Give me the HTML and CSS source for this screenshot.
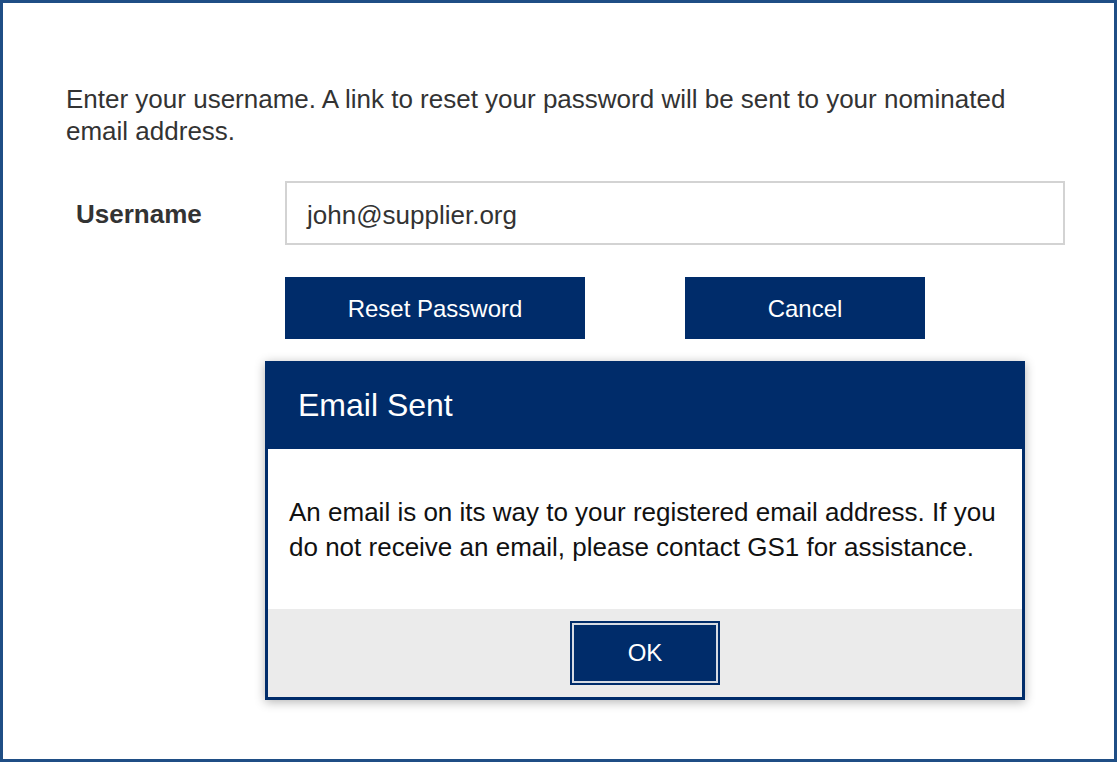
FILE: index.html
```html
<!DOCTYPE html>
<html>
<head>
<meta charset="utf-8">
<link rel="stylesheet" href="styles.css">
</head>
<body>
<div class="frame">
  <p class="intro">Enter your username. A link to reset your password will be sent to your nominated email address.</p>
  <div class="form">
    <label class="label">Username</label>
    <div class="input">john@supplier.org</div>
    <div class="actions">
      <button class="btn btn-reset">Reset Password</button>
      <button class="btn btn-cancel">Cancel</button>
    </div>
  </div>
  <div class="dialog">
    <div class="dialog-head">Email Sent</div>
    <div class="dialog-body">An email is on its way to your registered email address. If you do not receive an email, please contact GS1 for assistance.</div>
    <div class="dialog-foot"><button class="ok">OK</button></div>
  </div>
</div>
</body>
</html>
```
FILE: styles.css
```css
* { box-sizing: border-box; }
html, body { margin: 0; padding: 0; background: #fff; }
body { font-family: "Liberation Sans", Arial, sans-serif; }
.frame {
  position: relative;
  width: 1117px;
  height: 762px;
  border: 3px solid #1f4e85;
  padding: 80px 0 0 63px;
}
.intro {
  margin: 0;
  width: 960px;
  font-size: 26px;
  line-height: 32px;
  color: #333;
}
.form {
  display: grid;
  grid-template-columns: 219px 780px;
  row-gap: 32px;
  margin-top: 34px;
}
.label {
  font-size: 26px;
  font-weight: bold;
  color: #333;
  padding-left: 10px;
  padding-top: 2px;
  align-self: center;
}
.input {
  height: 64px;
  border: 2px solid #d3d3d3;
  font-size: 26px;
  color: #333;
  padding-left: 20px;
  padding-top: 4px;
  display: flex;
  align-items: center;
}
.actions {
  grid-column: 2;
  display: flex;
  gap: 100px;
}
.btn {
  height: 62px;
  border: 0;
  background: #002c6a;
  color: #fff;
  font-family: inherit;
  font-size: 24px;
  padding: 2px 0 0;
}
.btn-reset { width: 300px; }
.btn-cancel { width: 240px; }
.dialog {
  position: absolute;
  left: 262px;
  top: 358px;
  width: 760px;
  height: 339px;
  border: 3px solid #002c6a;
  background: #fff;
  box-shadow: 0 2px 10px rgba(0,0,0,0.3);
  display: flex;
  flex-direction: column;
}
.dialog-head {
  height: 85px;
  background: #002c6a;
  color: #fff;
  font-size: 32px;
  padding-left: 30px;
  display: flex;
  align-items: center;
  padding-bottom: 2px;
}
.dialog-body {
  height: 160px;
  padding: 46px 20px 0 21px;
  font-size: 26px;
  line-height: 35px;
  color: #111;
}
.dialog-foot {
  flex: 1;
  background: #ebebeb;
  display: flex;
  align-items: center;
  justify-content: center;
}
.ok {
  width: 150px;
  height: 64px;
  background: #002c6a;
  border: 2px solid #002c6a;
  box-shadow: inset 0 0 0 2px #d6dbe3;
  color: #fff;
  font-family: inherit;
  font-size: 24px;
  padding: 0;
}
```
